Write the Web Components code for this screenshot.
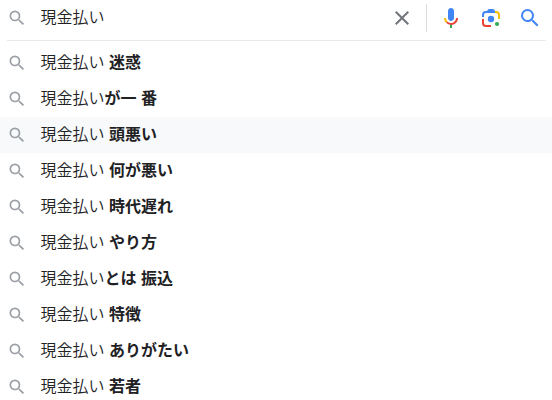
<!DOCTYPE html>
<html lang="ja">
<head>
<meta charset="utf-8">
<title>検索</title>
<style>
  body {
    margin: 0;
    width: 552px;
    height: 400px;
    overflow: hidden;
    background: #fff;
    color: #212124;
    font: 350 16px/22px "Liberation Sans", "Noto Sans CJK JP", sans-serif;
  }
</style>
</head>
<body>
<search-panel>
  <search-bar slot="bar" value="現金払い"></search-bar>
  <search-suggestion query="現金払い">&nbsp;迷惑</search-suggestion>
  <search-suggestion query="現金払い">が一 番</search-suggestion>
  <search-suggestion query="現金払い" active>&nbsp;頭悪い</search-suggestion>
  <search-suggestion query="現金払い">&nbsp;何が悪い</search-suggestion>
  <search-suggestion query="現金払い">&nbsp;時代遅れ</search-suggestion>
  <search-suggestion query="現金払い">&nbsp;やり方</search-suggestion>
  <search-suggestion query="現金払い">とは 振込</search-suggestion>
  <search-suggestion query="現金払い">&nbsp;特徴</search-suggestion>
  <search-suggestion query="現金払い">&nbsp;ありがたい</search-suggestion>
  <search-suggestion query="現金払い">&nbsp;若者</search-suggestion>
</search-panel>

<script>
const icons = {
  search: '<path fill="currentColor" d="M15.5 14h-.79l-.28-.27A6.471 6.471 0 0 0 16 9.5 6.5 6.5 0 1 0 9.5 16c1.61 0 3.09-.59 4.23-1.57l.27.28v.79l5 4.99L20.49 19l-4.99-5zm-6 0C7.01 14 5 11.99 5 9.5S7.01 5 9.5 5 14 7.01 14 9.5 11.99 14 9.5 14z"/>',
  clear: '<path fill="currentColor" d="M19 6.41L17.59 5 12 10.59 6.41 5 5 6.41 10.59 12 5 17.59 6.41 19 12 13.41 17.59 19 19 17.59 13.41 12z"/>',
  mic: `
    <path fill="#4285f4" d="M12 15c1.66 0 3-1.31 3-2.97V5c0-1.66-1.34-3-3-3S9 3.34 9 5v7.03C9 13.69 10.34 15 12 15z"/>
    <path fill="#34a853" d="M11 18.08h2V22h-2z"/>
    <path fill="#fbbc04" d="M7.05 16.87C5.78 15.59 5 13.9 5 12h2c0 1.38.56 2.63 1.47 3.53v.01z"/>
    <path fill="#ea4335" d="M12 16.93a4.97 4.97 0 0 1-3.54-1.55l-1.41 1.49A6.97 6.97 0 0 0 12 18.92c3.87 0 6.99-2.92 6.99-7h-1.99c0 2.92-2.24 5.01-5 5.01z"/>`,
  lens: `
    <circle cx="12" cy="13" r="3.2" fill="#4285f4"/>
    <circle cx="18" cy="18" r="2.1" fill="#34a853"/>
    <path fill="#4285f4" d="M3 11V9a4 4 0 0 1 4-4h1l1-1.4Q9.4 3 10.2 3h3.6q.8 0 1.2.6L16 5v2H7a2 2 0 0 0-2 2v2z"/>
    <path fill="#fbbc04" d="M16 5h1a4 4 0 0 1 4 4v4h-2V9a2 2 0 0 0-2-2h-1z"/>
    <path fill="#ea4335" d="M3 13v4a4 4 0 0 0 4 4h5v-2H7a2 2 0 0 1-2-2v-4z"/>`
};

/** Icon picked by name, sized with --size */
class SearchIcon extends HTMLElement {
  constructor () {
    super();
    this.attachShadow({mode: 'open'});
  }
  connectedCallback () {
    this.shadowRoot.innerHTML = `
      <style>
      :host { display: block; flex: none; width: var(--size, 20px); height: var(--size, 20px); }
      svg { display: block; width: 100%; height: 100%; }
      </style>
      <svg viewBox="0 0 24 24" aria-hidden="true">${icons[this.getAttribute('name')]}</svg>`;
  }
}
customElements.define('search-icon', SearchIcon);

const barTemplate = document.createElement('template');
barTemplate.innerHTML = `
  <style>
  :host { display: flex; align-items: center; height: 36px; padding-left: 7px; }
  .glass { --size: 20px; margin-bottom: 1px; color: #9aa0a6; }
  #value { flex: 1; margin-left: 13.5px; }
  .clear { --size: 24px; color: #70757a; }
  .line { width: 1px; height: 28px; margin: 0 12px; background: #dadce0; }
  .tools { display: flex; gap: 16px; --size: 24px; margin-right: 10px; }
  .go { margin-left: -1px; color: #4285f4; }
  </style>
  <search-icon class="glass" name="search"></search-icon>
  <span id="value"></span>
  <search-icon class="clear" name="clear"></search-icon>
  <span class="line"></span>
  <div class="tools">
    <search-icon name="mic"></search-icon>
    <search-icon name="lens"></search-icon>
    <search-icon class="go" name="search"></search-icon>
  </div>
`;

class SearchBar extends HTMLElement {
  constructor () {
    super();
    this.attachShadow({mode: 'open'}).appendChild(barTemplate.content.cloneNode(true));
  }
  connectedCallback () {
    this.shadowRoot.getElementById('value').textContent = this.getAttribute('value');
  }
}
customElements.define('search-bar', SearchBar);

const suggestionTemplate = document.createElement('template');
suggestionTemplate.innerHTML = `
  <style>
  :host { display: flex; align-items: center; height: 36px; padding-left: 7px; }
  :host([active]) { background: #f8f9fa; }
  search-icon { color: #9aa0a6; }
  .text { margin-left: 13.5px; white-space: pre; }
  b { font-weight: 700; }
  </style>
  <search-icon name="search"></search-icon>
  <span class="text"><span id="query"></span><b><slot></slot></b></span>
`;

class SearchSuggestion extends HTMLElement {
  constructor () {
    super();
    this.attachShadow({mode: 'open'}).appendChild(suggestionTemplate.content.cloneNode(true));
  }
  connectedCallback () {
    this.shadowRoot.getElementById('query').textContent = this.getAttribute('query');
  }
}
customElements.define('search-suggestion', SearchSuggestion);

class SearchPanel extends HTMLElement {
  constructor () {
    super();
    this.attachShadow({mode: 'open'}).innerHTML = `
      <style>
      :host { display: block; }
      .rule { height: 1px; margin: 4px 6px 4px 7px; background: #e8eaed; }
      </style>
      <slot name="bar"></slot>
      <div class="rule"></div>
      <slot></slot>`;
  }
}
customElements.define('search-panel', SearchPanel);
</script>
</body>
</html>
